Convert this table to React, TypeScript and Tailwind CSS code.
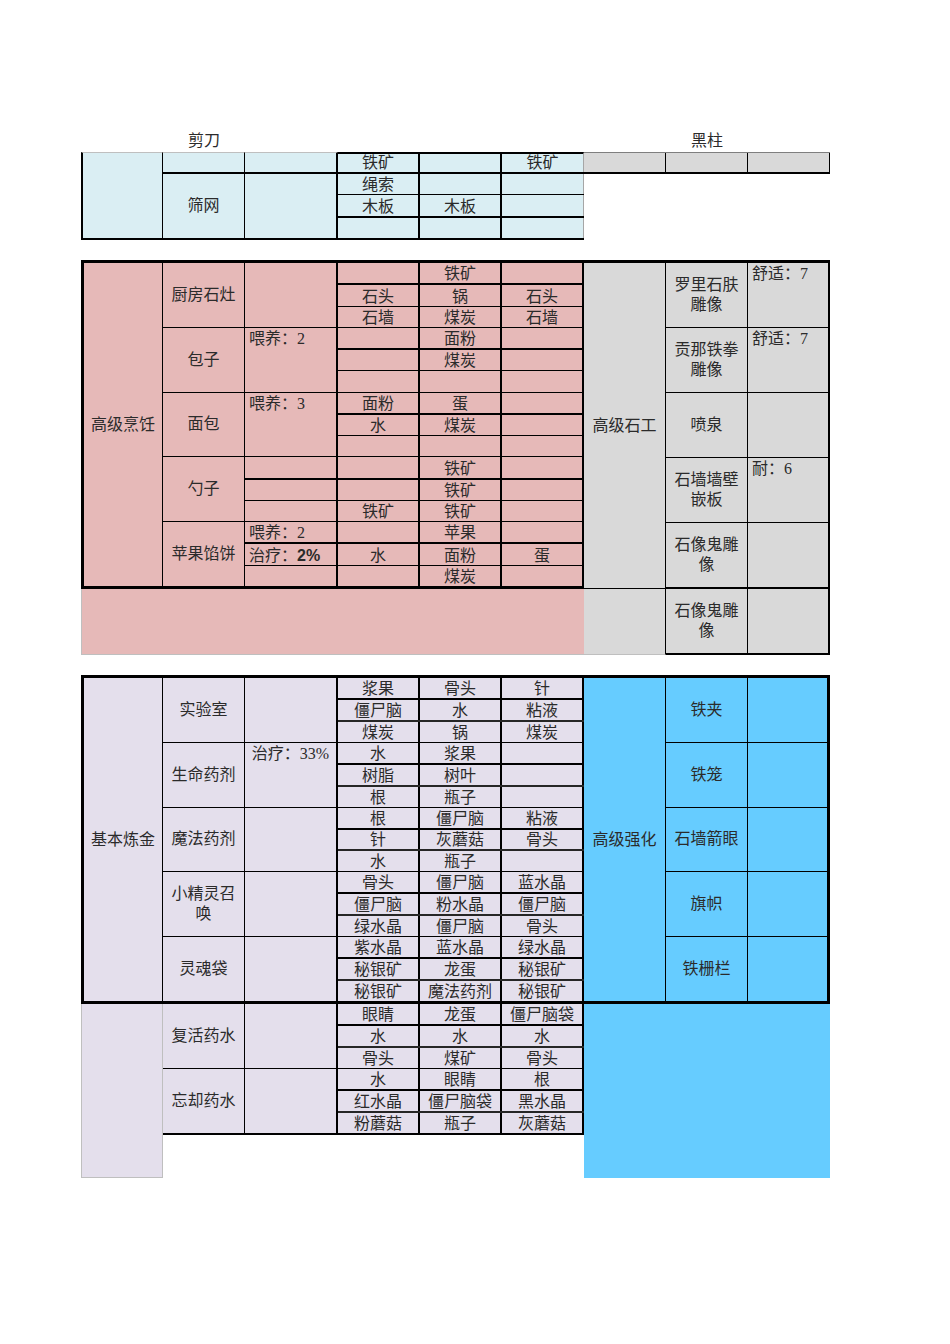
import React from 'react';
import clsx from 'clsx';

// one recipe block: name in column B, note in column C, 3x3 materials in D-F
interface Item {
  name: string[];
  note?: React.ReactNode;
  noteRows?: React.ReactNode[];
  center?: boolean;
  mats: string[][];
}

const cooking: Item[] = [
  { name: ['厨房石灶'], mats: [['', '铁矿', ''], ['石头', '锅', '石头'], ['石墙', '煤炭', '石墙']] },
  { name: ['包子'], note: '喂养：2', mats: [['', '面粉', ''], ['', '煤炭', ''], ['', '', '']] },
  { name: ['面包'], note: '喂养：3', mats: [['面粉', '蛋', ''], ['水', '煤炭', ''], ['', '', '']] },
  { name: ['勺子'], noteRows: ['', '', ''], mats: [['', '铁矿', ''], ['', '铁矿', ''], ['铁矿', '铁矿', '']] },
  {
    name: ['苹果馅饼'],
    noteRows: [
      '喂养：2',
      <>治疗：<span className="font-['Liberation_Sans',sans-serif] font-bold">2%</span></>,
      '',
    ],
    mats: [['', '苹果', ''], ['水', '面粉', '蛋'], ['', '煤炭', '']],
  },
];

const alchemy: Item[] = [
  { name: ['实验室'], mats: [['浆果', '骨头', '针'], ['僵尸脑', '水', '粘液'], ['煤炭', '锅', '煤炭']] },
  { name: ['生命药剂'], note: '治疗：33%', center: true, mats: [['水', '浆果', ''], ['树脂', '树叶', ''], ['根', '瓶子', '']] },
  { name: ['魔法药剂'], mats: [['根', '僵尸脑', '粘液'], ['针', '灰蘑菇', '骨头'], ['水', '瓶子', '']] },
  { name: ['小精灵召', '唤'], mats: [['骨头', '僵尸脑', '蓝水晶'], ['僵尸脑', '粉水晶', '僵尸脑'], ['绿水晶', '僵尸脑', '骨头']] },
  { name: ['灵魂袋'], mats: [['紫水晶', '蓝水晶', '绿水晶'], ['秘银矿', '龙蛋', '秘银矿'], ['秘银矿', '魔法药剂', '秘银矿']] },
];

const potions: Item[] = [
  { name: ['复活药水'], mats: [['眼睛', '龙蛋', '僵尸脑袋'], ['水', '水', '水'], ['骨头', '煤矿', '骨头']] },
  { name: ['忘却药水'], mats: [['水', '眼睛', '根'], ['红水晶', '僵尸脑袋', '黑水晶'], ['粉蘑菇', '瓶子', '灰蘑菇']] },
];

const stone = [
  { name: ['罗里石肤', '雕像'], note: '舒适：7' },
  { name: ['贡那铁拳', '雕像'], note: '舒适：7' },
  { name: ['喷泉'], note: '' },
  { name: ['石墙墙壁', '嵌板'], note: '耐：6' },
  { name: ['石像鬼雕', '像'], note: '' },
];

const forge = ['铁夹', '铁笼', '石墙箭眼', '旗帜', '铁栅栏'];

const Lines = ({ lines }: { lines: string[] }) => (
  <div className="text-center leading-[20px]">
    {lines.map((l) => (
      <div key={l}>{l}</div>
    ))}
  </div>
);

const Mats = ({ rows, dark }: { rows: string[][]; dark?: boolean }) => (
  <div className="flex w-[246px] flex-col">
    {rows.map((r, i) => (
      <div
        key={i}
        className={clsx(
          'flex flex-1',
          i === 0 && 'border-b-2 border-black',
          i === 1 && (dark ? 'border-b-2 border-[#262626]' : 'border-b border-black'),
        )}
      >
        {r.map((m, j) => (
          <div key={j} className="flex w-[82px] items-end justify-center border-r-2 border-black pb-px leading-none">
            {m}
          </div>
        ))}
      </div>
    ))}
  </div>
);

const Recipe = ({ item, dark }: { item: Item; dark?: boolean }) => (
  <div className="flex flex-1 border-b border-black last:border-b-0">
    <div className="flex w-[82px] items-center justify-center border-r border-black">
      <Lines lines={item.name} />
    </div>
    {item.noteRows ? (
      <div className="flex w-[93px] flex-col border-r-2 border-black">
        {item.noteRows.map((n, i) => (
          <div
            key={i}
            className={clsx(
              'flex flex-1 items-end pb-px pl-1 leading-none',
              i === 0 && 'border-b-2 border-black',
              i === 1 && 'border-b border-black',
            )}
          >
            {n}
          </div>
        ))}
      </div>
    ) : (
      <div
        className={clsx(
          'flex w-[93px] border-r-2 border-black pt-[3px] leading-none',
          item.center ? 'justify-center' : 'pl-1',
        )}
      >
        {item.note}
      </div>
    )}
    <Mats rows={item.mats} dark={dark} />
  </div>
);

export default function App() {
  return (
    <div className="min-h-[1344px] bg-white pl-[81px] pt-[130px] font-['Liberation_Serif','Noto_Sans_CJK_SC',serif] text-[16px] text-[#2b2b2b]">
      {/* column captions */}
      <div className="flex h-[22px]">
        <div className="w-[82px]" />
        <div className="flex w-[82px] items-end justify-center pb-[3px] leading-none">剪刀</div>
        <div className="w-[421px]" />
        <div className="flex w-[82px] items-end justify-center pb-[3px] leading-none">黑柱</div>
      </div>

      {/* tail of the first table */}
      <div className="flex h-[88px]">
        <div className="w-[82px] border-b-2 border-l-2 border-r border-t border-black border-t-[#bfbfbf] bg-[#daeef3]" />
        <div className="flex flex-col bg-[#daeef3]">
          <div className="flex h-[22px] border-b-2 border-black">
            <div className="w-[82px] border-r border-t border-black border-t-[#bfbfbf]" />
            <div className="w-[93px] border-r-2 border-t border-black border-t-[#bfbfbf]" />
            <div className="flex w-[82px] items-end justify-center border-r-2 border-t-2 border-black pb-px leading-none">铁矿</div>
            <div className="w-[82px] border-r-2 border-t-2 border-black" />
            <div className="flex w-[82px] items-end justify-center border-r border-t-2 border-black border-r-[#a6a6a6] pb-px leading-none">铁矿</div>
          </div>
          <div className="flex flex-1 border-b-2 border-black">
            <div className="flex w-[82px] items-center justify-center border-r border-black">筛网</div>
            <div className="w-[93px] border-r-2 border-black" />
            <div className="flex w-[246px] flex-col">
              <div className="flex flex-1 border-b border-black">
                <div className="flex w-[82px] items-end justify-center border-r-2 border-black pb-px leading-none">绳索</div>
                <div className="w-[82px] border-r-2 border-black" />
                <div className="w-[82px] border-r border-[#a6a6a6]" />
              </div>
              <div className="flex flex-1 border-b-2 border-black">
                <div className="flex w-[82px] items-end justify-center border-r-2 border-black pb-px leading-none">木板</div>
                <div className="flex w-[82px] items-end justify-center border-r-2 border-black pb-px leading-none">木板</div>
                <div className="w-[82px] border-r border-[#a6a6a6]" />
              </div>
              <div className="flex flex-1">
                <div className="w-[82px] border-r-2 border-black" />
                <div className="w-[82px] border-r-2 border-black" />
                <div className="w-[82px] border-r border-[#a6a6a6]" />
              </div>
            </div>
          </div>
        </div>
        <div className="flex h-[22px] border-b-2 border-t border-black border-t-[#7f7f7f] bg-[#d9d9d9]">
          <div className="w-[82px] border-r border-black" />
          <div className="w-[82px] border-r border-black" />
          <div className="w-[82px] border-r border-black" />
        </div>
      </div>

      <div className="h-[20px]" />

      {/* advanced cooking / advanced masonry */}
      <div className="flex">
        <div className="flex flex-col">
          <div className="flex h-[329px] border-b-[3px] border-l-[3px] border-t-[3px] border-black bg-[#e6b9b8]">
            <div className="flex w-[79px] items-center justify-center border-r border-black">高级烹饪</div>
            <div className="flex flex-col">
              {cooking.map((it) => (
                <Recipe key={it.name.join('')} item={it} />
              ))}
            </div>
          </div>
          <div className="h-[66px] w-[503px] border-b border-l border-[#bfbfbf] bg-[#e6b9b8]" />
        </div>
        <div className="flex flex-col">
          <div className="flex h-[329px] border-t-[3px] border-black bg-[#d9d9d9]">
            <div className="flex w-[82px] items-center justify-center border-b border-r border-black">高级石工</div>
            <div className="flex flex-col border-b-2 border-black">
              {stone.map((s) => (
                <div key={s.name.join('')} className="flex flex-1 border-b border-black last:border-b-0">
                  <div className="flex w-[82px] items-center justify-center border-r border-black">
                    <Lines lines={s.name} />
                  </div>
                  <div className="w-[82px] border-r-2 border-black pl-1 pt-[3px] leading-none">{s.note}</div>
                </div>
              ))}
            </div>
          </div>
          <div className="flex h-[66px]">
            <div className="w-[82px] border-b border-r border-[#bfbfbf] border-r-black bg-[#d9d9d9]" />
            <div className="flex w-[82px] items-center justify-center border-b-2 border-r border-black bg-[#d9d9d9]">
              <Lines lines={['石像鬼雕', '像']} />
            </div>
            <div className="w-[82px] border-b-2 border-r-2 border-black bg-[#d9d9d9]" />
          </div>
        </div>
      </div>

      <div className="h-[20px]" />

      {/* basic alchemy / advanced reinforcement */}
      <div className="flex">
        <div className="flex h-[329px] border-b-[3px] border-l-[3px] border-t-[3px] border-black bg-[#e4dfec]">
          <div className="flex w-[79px] items-center justify-center border-r border-black">基本炼金</div>
          <div className="flex flex-col">
            {alchemy.map((it) => (
              <Recipe key={it.name.join('')} item={it} dark />
            ))}
          </div>
        </div>
        <div className="flex h-[329px] border-b-[3px] border-r-[3px] border-t-[3px] border-black bg-[#66ccff]">
          <div className="flex w-[82px] items-center justify-center border-r border-black">高级强化</div>
          <div className="flex flex-col">
            {forge.map((f) => (
              <div key={f} className="flex flex-1 border-b border-black last:border-b-0">
                <div className="flex w-[82px] items-center justify-center border-r border-black">{f}</div>
                <div className="w-[79px]" />
              </div>
            ))}
          </div>
        </div>
      </div>
      <div className="flex">
        <div className="h-[174px] w-[82px] border-b border-l border-r border-[#bfbfbf] bg-[#e4dfec]" />
        <div className="flex h-[131px] flex-col border-b-2 border-black bg-[#e4dfec]">
          {potions.map((it) => (
            <Recipe key={it.name.join('')} item={it} dark />
          ))}
        </div>
        <div className="h-[174px] w-[246px] bg-[#66ccff]" />
      </div>
    </div>
  );
}
